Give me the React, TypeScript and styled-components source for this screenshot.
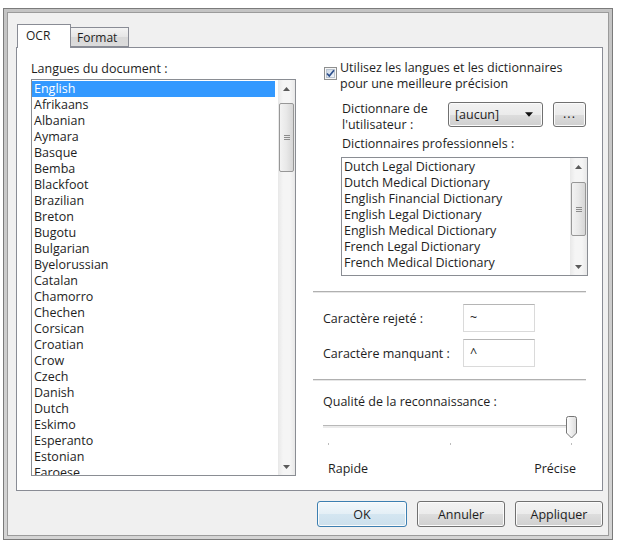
import React from 'react';
import styled, { createGlobalStyle } from 'styled-components';

const languages = [
  'English', 'Afrikaans', 'Albanian', 'Aymara', 'Basque', 'Bemba', 'Blackfoot', 'Brazilian', 'Breton',
  'Bugotu', 'Bulgarian', 'Byelorussian', 'Catalan', 'Chamorro', 'Chechen', 'Corsican', 'Croatian', 'Crow',
  'Czech', 'Danish', 'Dutch', 'Eskimo', 'Esperanto', 'Estonian', 'Faroese',
];

const dictionaries = [
  'Dutch Legal Dictionary',
  'Dutch Medical Dictionary',
  'English Financial Dictionary',
  'English Legal Dictionary',
  'English Medical Dictionary',
  'French Legal Dictionary',
  'French Medical Dictionary',
];

interface IListProps {
  items: string[];
  height: number;
  selected?: number;
  thumbOffset: number;
  thumbSize: number;
}

const Arrow: React.FC<{ down?: boolean; dark?: boolean }> = ({ down, dark }) => (
  <svg width={dark ? 8 : 7} height={dark ? 5 : 4} viewBox="0 0 7 4">
    <path d={down ? 'M0 0 L7 0 L3.5 4 Z' : 'M0 4 L7 4 L3.5 0 Z'} fill={dark ? '#111111' : '#5a5a5a'} />
  </svg>
);

const ListView: React.FC<IListProps> = ({ items, height, selected, thumbOffset, thumbSize }) => (
  <ListBox $height={height}>
    <Items>
      {items.map((item, i) => (
        <Item key={item} $selected={i === selected}>
          {item}
        </Item>
      ))}
    </Items>
    <ScrollBar>
      <ArrowCell>
        <Arrow />
      </ArrowCell>
      <Track $offset={thumbOffset}>
        <Thumb $size={thumbSize}>
          <Grip />
        </Thumb>
      </Track>
      <ArrowCell>
        <Arrow down />
      </ArrowCell>
    </ScrollBar>
  </ListBox>
);

const CheckBox: React.FC = () => (
  <CheckBoxBox width="13" height="13" viewBox="0 0 13 13">
    <defs>
      <linearGradient id="cbg" x1="0" y1="0" x2="1" y2="1">
        <stop offset="0" stopColor="#cbd6e4" />
        <stop offset="1" stopColor="#f4f7fb" />
      </linearGradient>
    </defs>
    <rect x="0.5" y="0.5" width="12" height="12" fill="#f6f6f6" stroke="#8e8f8f" />
    <rect x="2.5" y="2.5" width="8" height="8" fill="url(#cbg)" stroke="#b9c3cf" />
    <path d="M3 6.5 L5.3 9 L10 3.2" fill="none" stroke="#2c4f8c" strokeWidth="1.7" />
  </CheckBoxBox>
);

const SliderThumb: React.FC = () => (
  <ThumbSvg width="13" height="23" viewBox="0 0 13 23">
    <defs>
      <linearGradient id="thg" x1="0" y1="0" x2="1" y2="0">
        <stop offset="0" stopColor="#ffffff" />
        <stop offset="1" stopColor="#dcdcdc" />
      </linearGradient>
    </defs>
    <path d="M1.5 2.5 Q1.5 0.5 3.5 0.5 L9.5 0.5 Q11.5 0.5 11.5 2.5 L11.5 17 L6.5 22 L1.5 17 Z" fill="url(#thg)" stroke="#767676" />
  </ThumbSvg>
);

const App: React.FC = () => (
  <>
    <GlobalStyle />
    <Frame>
      <Body>
        <TabRow>
          <Tab $active>OCR</Tab>
          <Tab>Format</Tab>
        </TabRow>
        <Panel>
          <LeftColumn>
            <FieldLabel>Langues du document :</FieldLabel>
            <ListView items={languages} height={397} selected={0} thumbOffset={6} thumbSize={69} />
          </LeftColumn>
          <RightColumn>
            <CheckRow>
              <CheckBox />
              <CheckText>
                <div>Utilisez les langues et les dictionnaires</div>
                <div>pour une meilleure précision</div>
              </CheckText>
            </CheckRow>
            <DictRow>
              <DictLabel>
                <div>Dictionnare de</div>
                <div>l'utilisateur :</div>
              </DictLabel>
              <Combo>
                [aucun]
                <Arrow down dark />
              </Combo>
              <DotsButton>...</DotsButton>
            </DictRow>
            <ProLabel>Dictionnaires professionnels :</ProLabel>
            <ProListWrap>
              <ListView items={dictionaries} height={119} thumbOffset={7} thumbSize={54} />
            </ProListWrap>
            <Separator $top={15} />
            <CharRow $top={11}>
              <CharLabel>Caractère rejeté :</CharLabel>
              <CharInput>~</CharInput>
            </CharRow>
            <CharRow $top={7}>
              <CharLabel>Caractère manquant :</CharLabel>
              <CharInput>^</CharInput>
            </CharRow>
            <Separator $top={12} />
            <QualityLabel>Qualité de la reconnaissance :</QualityLabel>
            <Slider>
              <SliderTrack />
              <SliderThumb />
            </Slider>
            <Ticks>
              <Tick />
              <Tick />
              <Tick />
            </Ticks>
            <RangeLabels>
              <span>Rapide</span>
              <span>Précise</span>
            </RangeLabels>
          </RightColumn>
        </Panel>
        <ButtonRow>
          <Button $primary $width={90}>OK</Button>
          <Button $width={88}>Annuler</Button>
          <Button $width={88}>Appliquer</Button>
        </ButtonRow>
      </Body>
    </Frame>
  </>
);

export default App;

const GlobalStyle = createGlobalStyle`
  body {
    margin: 0;
    background: #ffffff;
    font-family: 'Open Sans', 'Noto Sans', sans-serif;
    font-size: 12.5px;
    color: #1e1e1e;
  }
`;

const Frame = styled.div`
  box-sizing: border-box;
  width: 610px;
  height: 532px;
  margin: 8px 0 0 3px;
  padding: 3px;
  border: 1px solid #7b7b7b;
  background: linear-gradient(#c4c4c4, #d4d4d4);
`;

const Body = styled.div`
  box-sizing: border-box;
  height: 100%;
  display: flex;
  flex-direction: column;
  padding: 11px 5px 0 8px;
  border: 1px solid #9b9b9b;
  background: #f0f0f0;
`;

const TabRow = styled.div`
  display: flex;
  align-items: flex-end;
  height: 23px;
  padding-left: 1px;
`;

const Tab = styled.div<{ $active?: boolean }>`
  box-sizing: border-box;
  position: relative;
  z-index: 1;
  height: ${({ $active }) => ($active ? '24px' : '20px')};
  width: ${({ $active }) => ($active ? '54px' : '58px')};
  margin-bottom: ${({ $active }) => ($active ? '-1px' : '0')};
  padding: ${({ $active }) => ($active ? '3px 0 0 8px' : '2px 0 0 6px')};
  border: 1px solid #898c95;
  border-bottom: ${({ $active }) => ($active ? 'none' : '1px solid #898c95')};
  border-left: ${({ $active }) => ($active ? '1px solid #898c95' : 'none')};
  background: ${({ $active }) => ($active ? '#ffffff' : 'linear-gradient(#f3f3f3, #e6e6e6 50%, #d9d9d9 51%, #dcdcdc)')};
  font-size: 12px;
  line-height: 16px;
`;

const Panel = styled.div`
  box-sizing: border-box;
  height: 444px;
  display: grid;
  grid-template-columns: 265px 273px;
  column-gap: 17px;
  padding: 0 14px;
  border: 1px solid #898c95;
  background: #ffffff;
`;

const LeftColumn = styled.div`
  display: flex;
  flex-direction: column;
  padding-top: 13px;
`;

const FieldLabel = styled.div`
  line-height: 16px;
  margin-bottom: 2px;
`;

const ListBox = styled.div<{ $height: number }>`
  box-sizing: border-box;
  height: ${({ $height }) => $height}px;
  display: flex;
  overflow: hidden;
  border: 1px solid #8a8d93;
  background: #ffffff;
`;

const Items = styled.div`
  flex: 1;
  min-width: 0;
  padding: 1px 3px 0 0;
  overflow: hidden;
`;

const Item = styled.div<{ $selected?: boolean }>`
  height: 16px;
  line-height: 16px;
  padding-left: 2px;
  white-space: nowrap;
  background: ${({ $selected }) => ($selected ? '#3399ff' : 'transparent')};
  color: ${({ $selected }) => ($selected ? '#ffffff' : 'inherit')};
`;

const ScrollBar = styled.div`
  width: 17px;
  display: flex;
  flex-direction: column;
  background: linear-gradient(90deg, #e8e8e8, #f5f5f5 30%, #f5f5f5 70%, #e8e8e8);
`;

const ArrowCell = styled.div`
  height: 17px;
  display: flex;
  align-items: center;
  justify-content: center;
`;

const Track = styled.div<{ $offset: number }>`
  flex: 1;
  padding-top: ${({ $offset }) => $offset}px;
`;

const Thumb = styled.div<{ $size: number }>`
  box-sizing: border-box;
  height: ${({ $size }) => $size}px;
  margin: 0 1px;
  display: flex;
  align-items: center;
  justify-content: center;
  border: 1px solid #979797;
  border-radius: 2px;
  background: linear-gradient(90deg, #f3f3f3, #e8e8e8 50%, #d6d6d6);
`;

const Grip = styled.div`
  width: 6px;
  height: 5px;
  background: repeating-linear-gradient(#8c8c8c 0 1px, transparent 1px 2px);
`;

const RightColumn = styled.div`
  display: flex;
  flex-direction: column;
`;

const CheckRow = styled.div`
  display: flex;
  gap: 3px;
  margin-top: 12px;
  padding-left: 11px;
`;

const CheckBoxBox = styled.svg`
  flex: none;
  margin-top: 7px;
`;

const CheckText = styled.div`
  line-height: 16px;
`;

const DictRow = styled.div`
  display: flex;
  align-items: flex-start;
  margin-top: 9px;
  padding-left: 29px;
`;

const DictLabel = styled.div`
  width: 106px;
  line-height: 16px;
`;

const buttonFace = `
  box-sizing: border-box;
  border: 1px solid #707070;
  border-radius: 3px;
  box-shadow: inset 0 0 0 1px #fbfbfb;
  background: linear-gradient(#f2f2f2, #ebebeb 50%, #dddddd 51%, #cfcfcf);
  font-family: inherit;
  font-size: 12.5px;
  color: #1e1e1e;
`;

const Combo = styled.div`
  ${buttonFace}
  width: 95px;
  height: 25px;
  margin-top: 1px;
  display: flex;
  align-items: center;
  justify-content: space-between;
  padding: 0 9px 0 6px;
`;

const DotsButton = styled.div`
  ${buttonFace}
  width: 33px;
  height: 25px;
  margin: 1px 0 0 10px;
  display: flex;
  align-items: center;
  justify-content: center;
  padding-bottom: 3px;
  letter-spacing: 1px;
`;

const ProLabel = styled.div`
  margin-top: 3px;
  padding-left: 29px;
  line-height: 16px;
`;

const ProListWrap = styled.div`
  margin: 5px -2px 0 28px;
`;

const Separator = styled.div<{ $top: number }>`
  height: 1px;
  margin-top: ${({ $top }) => $top}px;
  border-bottom: 1px solid #e6e6e6;
  background: #b0b0b0;
`;

const CharRow = styled.div<{ $top: number }>`
  display: flex;
  align-items: center;
  margin-top: ${({ $top }) => $top}px;
  padding-left: 10px;
`;

const CharLabel = styled.div`
  width: 140px;
`;

const CharInput = styled.div`
  box-sizing: border-box;
  width: 72px;
  height: 28px;
  padding: 5px 0 0 6px;
  border: 1px solid #dadada;
  border-top-color: #b5b5b5;
  line-height: 16px;
`;

const QualityLabel = styled.div`
  margin-top: 13px;
  padding-left: 10px;
  line-height: 16px;
`;

const Slider = styled.div`
  position: relative;
  height: 26px;
  margin: 4px 8px 0 10px;
`;

const SliderTrack = styled.div`
  position: absolute;
  left: 0;
  right: 8px;
  top: 11px;
  height: 2px;
  border-top: 1px solid #b8b8b8;
  background: #ebebeb;
`;

const ThumbSvg = styled.svg`
  position: absolute;
  right: 0;
  top: 2px;
`;

const Ticks = styled.div`
  display: flex;
  justify-content: space-between;
  height: 6px;
  margin: 1px 14px 0 15px;
  align-items: center;
`;

const Tick = styled.div`
  width: 1px;
  height: 2px;
  background: #bdbdbd;
`;

const RangeLabels = styled.div`
  display: flex;
  justify-content: space-between;
  margin: 14px 10px 0 15px;
  line-height: 16px;
`;

const ButtonRow = styled.div`
  display: flex;
  justify-content: flex-end;
  gap: 10px;
  margin-top: 10px;
`;

const Button = styled.button<{ $primary?: boolean; $width: number }>`
  ${buttonFace}
  width: ${({ $width }) => $width}px;
  height: 26px;
  padding: 0;
  border-color: ${({ $primary }) => ($primary ? '#3c7fb1' : '#707070')};
  background: ${({ $primary }) =>
    $primary
      ? 'linear-gradient(#f2f8fc, #e4eff6 50%, #d4e6f1 51%, #cce0ec)'
      : 'linear-gradient(#f2f2f2, #ebebeb 50%, #dddddd 51%, #cfcfcf)'};
`;
